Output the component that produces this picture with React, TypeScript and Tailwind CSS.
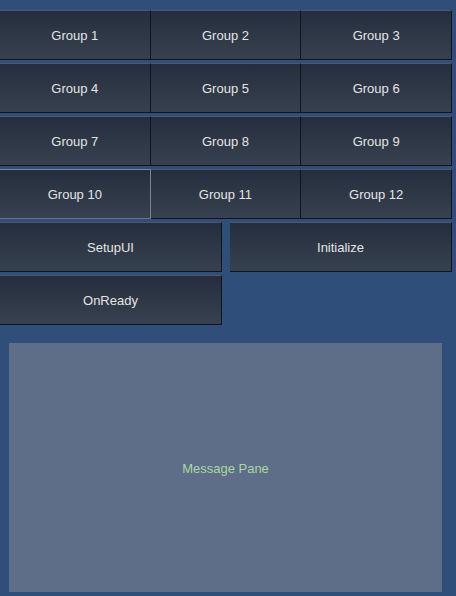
const groups = Array.from({ length: 12 }, (_, i) => `Group ${i + 1}`);

const Btn = ({ label, active = false }: { label: string; active?: boolean }) => (
  <button
    className={`h-[50px] w-full flex items-center justify-center pt-[2px] bg-gradient-to-b from-[#252e3e] to-[#38414f] text-[13px] text-[#e4e4e4] border-t border-b border-r ${
      active
        ? "border-t-[#7b8290] border-r-[#7b8290] border-b-[#6b7280]"
        : "border-t-[#4d586a] border-b-[#10141c] border-r-[#10141c]"
    }`}
  >
    {label}
  </button>
);

export default function App() {
  return (
    <div
      className="w-[456px] h-[596px] bg-[#2f4e7a] overflow-hidden"
      style={{ fontFamily: '"Liberation Sans", Arial, sans-serif' }}
    >
      <div className="w-[452px] pt-[10px] flex flex-col gap-[3px]">
        <div className="grid grid-cols-3 gap-y-[3px]">
          {groups.map((g) => (
            <Btn key={g} label={g} active={g === "Group 10"} />
          ))}
        </div>
        <div className="flex gap-[8px]">
          <div className="w-[222px]">
            <Btn label="SetupUI" />
          </div>
          <div className="w-[222px]">
            <Btn label="Initialize" />
          </div>
        </div>
        <div className="w-[222px]">
          <Btn label="OnReady" />
        </div>
      </div>
      <div className="ml-[9px] mt-[18px] w-[433px] h-[249px] bg-[#5e6e88] flex items-center justify-center pt-[2px] text-[13px] text-[#a6d9a0]">
        Message Pane
      </div>
    </div>
  );
}
